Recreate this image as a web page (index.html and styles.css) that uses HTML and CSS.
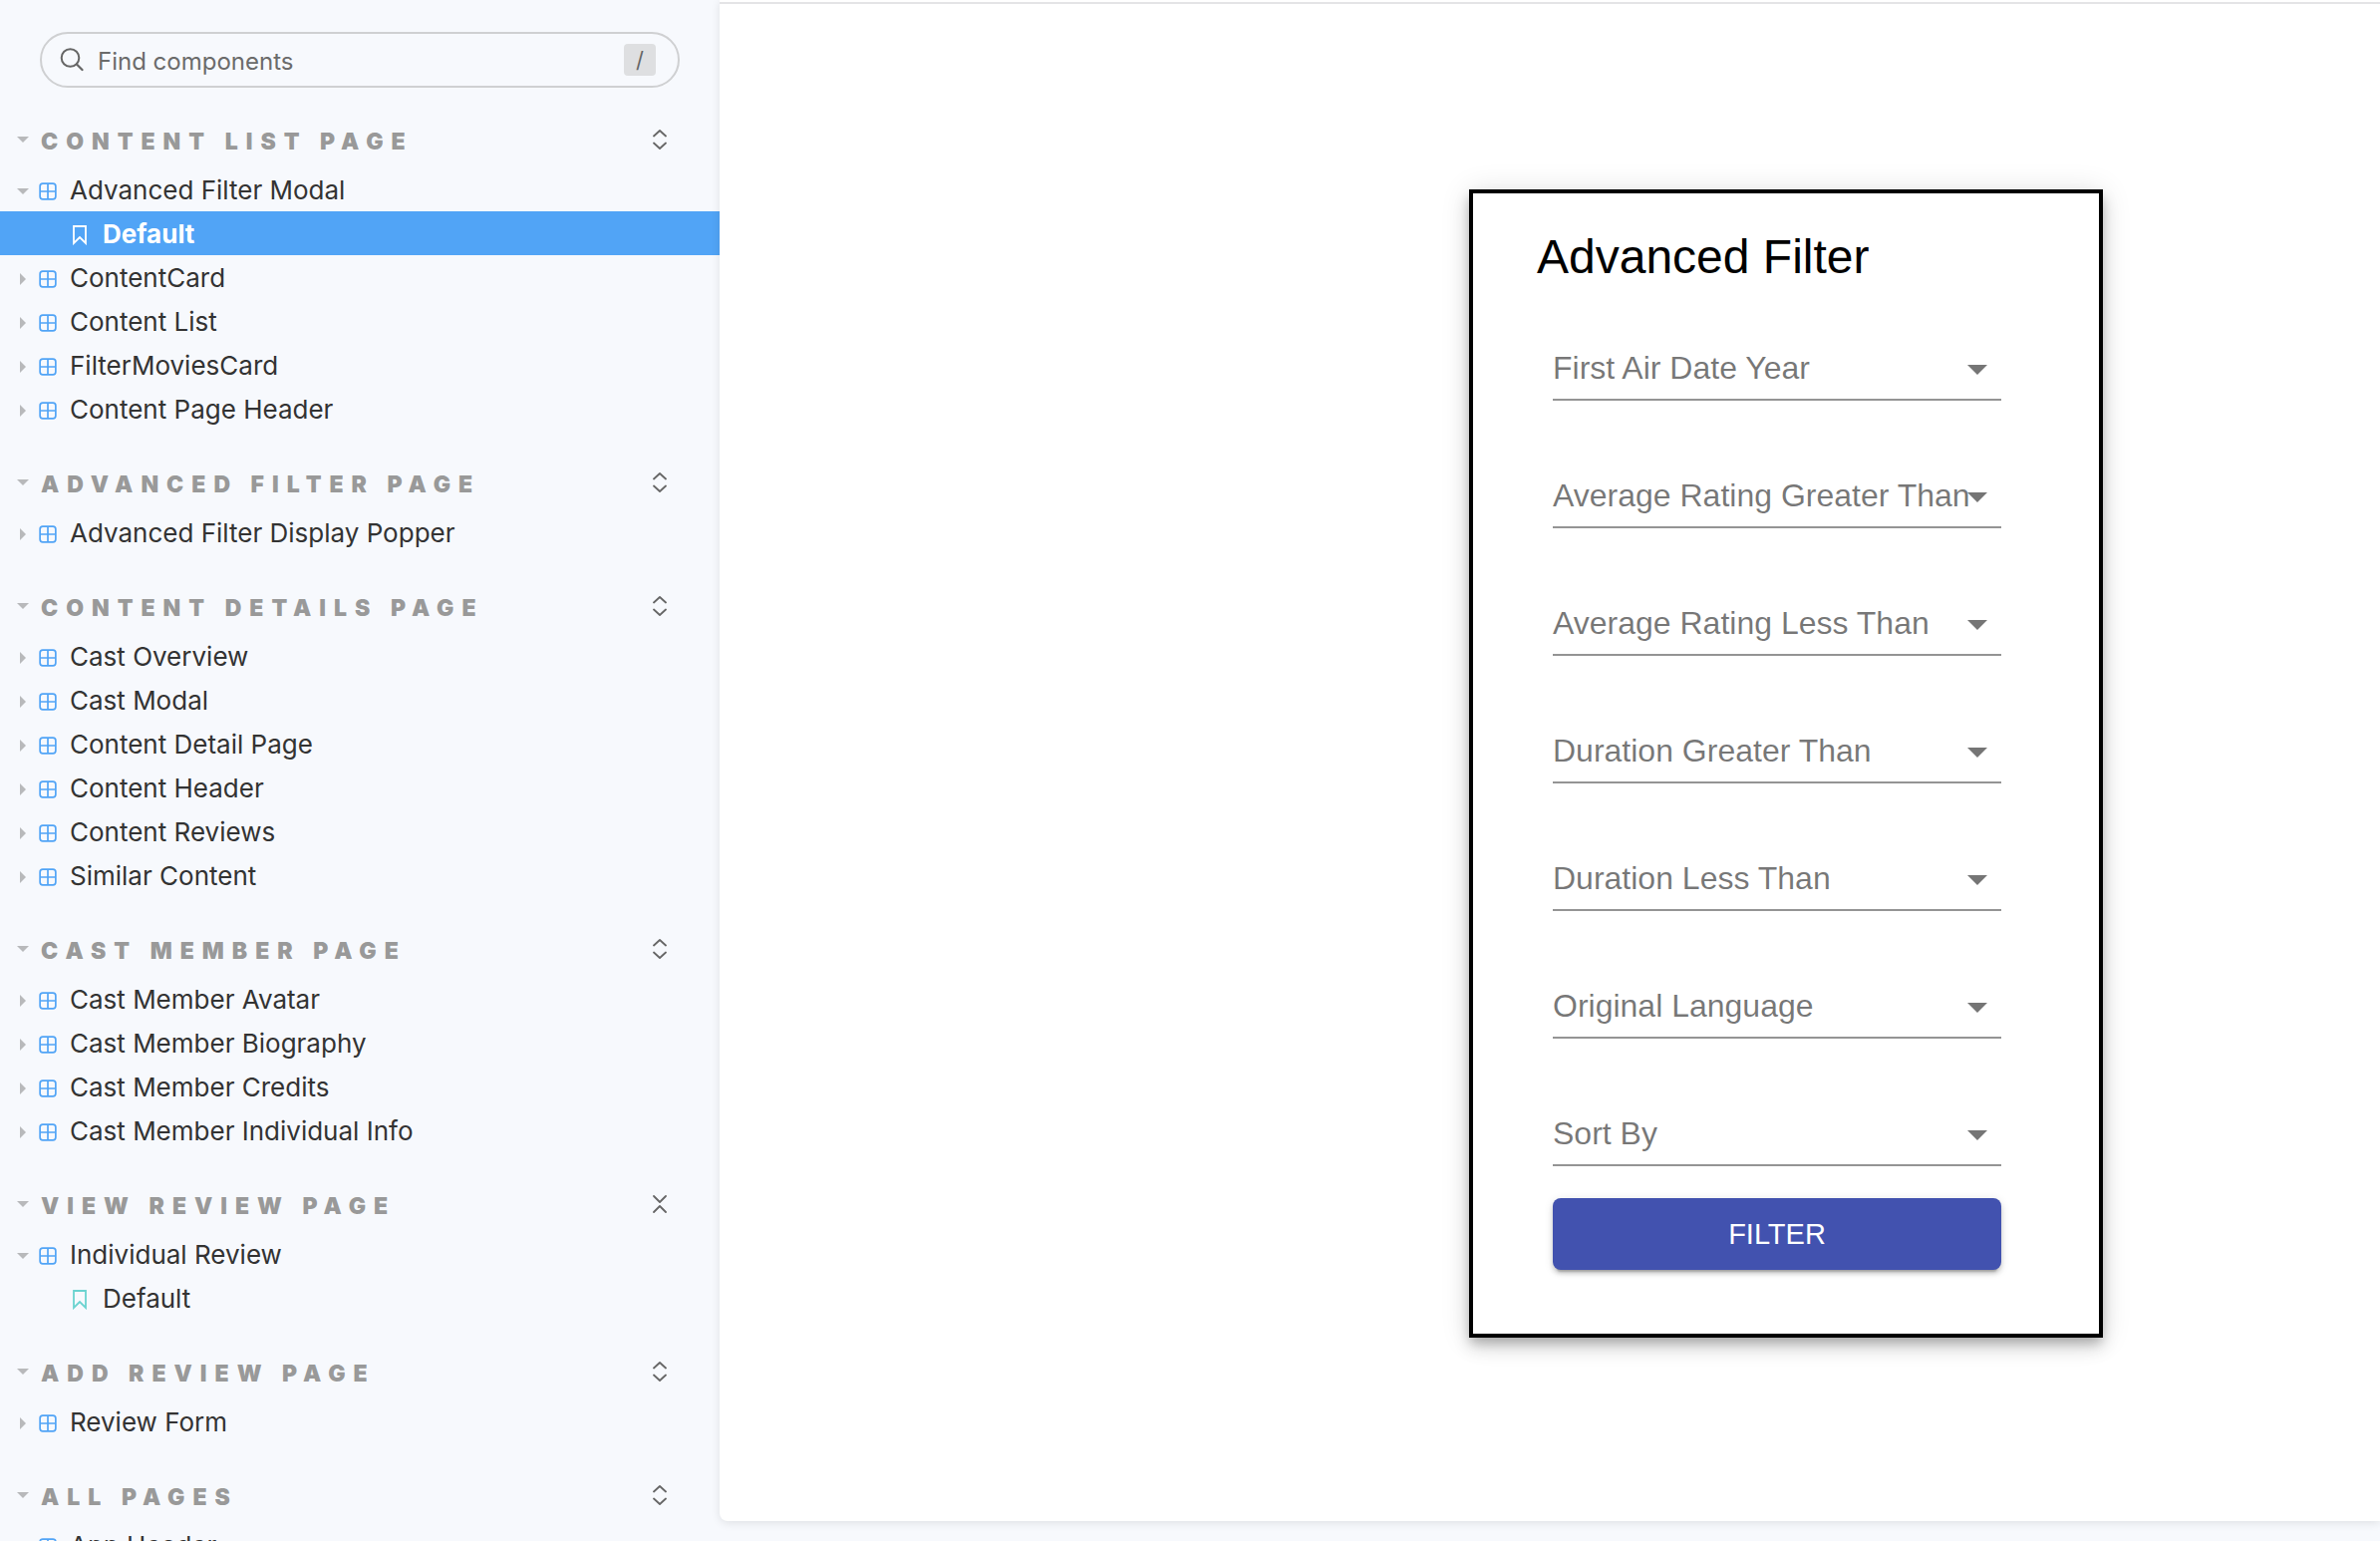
FILE: index.html
```html
<!DOCTYPE html>
<html lang="en">
<head>
<meta charset="utf-8">
<title>Advanced Filter Modal - Default</title>
<link rel="stylesheet" href="styles.css">
</head>
<body>
<svg class="sprite" aria-hidden="true">
  <symbol id="component" viewBox="0 0 16 16"><rect x="1" y="1" width="14" height="14" rx="2.5" fill="none" stroke="currentColor" stroke-width="1.5"/><path d="M8 1v14M1 8h14" stroke="currentColor" stroke-width="1.5"/></symbol>
  <symbol id="bookmark" viewBox="0 0 14 20"><path d="M1 1h12v17l-6-6-6 6z" fill="none" stroke="currentColor" stroke-width="1.8"/></symbol>
  <symbol id="down" viewBox="0 0 12 12"><path d="M0 3h12L6 9z" fill="currentColor"/></symbol>
  <symbol id="right" viewBox="0 0 12 12"><path d="M3 0v12l6-6z" fill="currentColor"/></symbol>
  <symbol id="expand" viewBox="0 0 14 20"><path d="M1 6.500l6-5.500 6 5.500M1 13.500l6 5.500 6-5.500" fill="none" stroke="currentColor" stroke-width="1.800" stroke-linecap="round" stroke-linejoin="round"/></symbol>
  <symbol id="collapse" viewBox="0 0 14 20"><path d="M1 2l6 6 6-6M1 18l6-6 6 6" fill="none" stroke="currentColor" stroke-width="1.800" stroke-linecap="round" stroke-linejoin="round"/></symbol>
</svg>
<div class="app">
  <aside class="sidebar">
    <form class="search" role="search">
      <svg class="search-icon" viewBox="0 0 24 24" aria-hidden="true"><circle cx="10.500" cy="10" r="8.800" fill="none" stroke="currentColor" stroke-width="2"/><path d="M17 16.500l5.500 5.500" stroke="currentColor" stroke-width="2.200" stroke-linecap="round"/></svg>
      <input class="search-input" type="text" placeholder="Find components" aria-label="Find components">
      <kbd class="key">/</kbd>
    </form>
    <nav>
      <section class="group">
        <div class="heading"><svg class="caret"><use href="#down"/></svg><h2 class="heading-text">Content List Page</h2><button class="toggle" type="button" aria-label="Expand all"><svg class="toggle-icon"><use href="#expand"/></svg></button></div>
        <a class="item" href="#"><svg class="caret"><use href="#down"/></svg><svg class="component"><use href="#component"/></svg>Advanced Filter Modal</a>
        <a class="item story selected" href="#"><svg class="bookmark"><use href="#bookmark"/></svg>Default</a>
        <a class="item" href="#"><svg class="caret"><use href="#right"/></svg><svg class="component"><use href="#component"/></svg>ContentCard</a>
        <a class="item" href="#"><svg class="caret"><use href="#right"/></svg><svg class="component"><use href="#component"/></svg>Content List</a>
        <a class="item" href="#"><svg class="caret"><use href="#right"/></svg><svg class="component"><use href="#component"/></svg>FilterMoviesCard</a>
        <a class="item" href="#"><svg class="caret"><use href="#right"/></svg><svg class="component"><use href="#component"/></svg>Content Page Header</a>
      </section>
      <section class="group">
        <div class="heading"><svg class="caret"><use href="#down"/></svg><h2 class="heading-text">Advanced Filter Page</h2><button class="toggle" type="button" aria-label="Expand all"><svg class="toggle-icon"><use href="#expand"/></svg></button></div>
        <a class="item" href="#"><svg class="caret"><use href="#right"/></svg><svg class="component"><use href="#component"/></svg>Advanced Filter Display Popper</a>
      </section>
      <section class="group">
        <div class="heading"><svg class="caret"><use href="#down"/></svg><h2 class="heading-text">Content Details Page</h2><button class="toggle" type="button" aria-label="Expand all"><svg class="toggle-icon"><use href="#expand"/></svg></button></div>
        <a class="item" href="#"><svg class="caret"><use href="#right"/></svg><svg class="component"><use href="#component"/></svg>Cast Overview</a>
        <a class="item" href="#"><svg class="caret"><use href="#right"/></svg><svg class="component"><use href="#component"/></svg>Cast Modal</a>
        <a class="item" href="#"><svg class="caret"><use href="#right"/></svg><svg class="component"><use href="#component"/></svg>Content Detail Page</a>
        <a class="item" href="#"><svg class="caret"><use href="#right"/></svg><svg class="component"><use href="#component"/></svg>Content Header</a>
        <a class="item" href="#"><svg class="caret"><use href="#right"/></svg><svg class="component"><use href="#component"/></svg>Content Reviews</a>
        <a class="item" href="#"><svg class="caret"><use href="#right"/></svg><svg class="component"><use href="#component"/></svg>Similar Content</a>
      </section>
      <section class="group">
        <div class="heading"><svg class="caret"><use href="#down"/></svg><h2 class="heading-text">Cast Member Page</h2><button class="toggle" type="button" aria-label="Expand all"><svg class="toggle-icon"><use href="#expand"/></svg></button></div>
        <a class="item" href="#"><svg class="caret"><use href="#right"/></svg><svg class="component"><use href="#component"/></svg>Cast Member Avatar</a>
        <a class="item" href="#"><svg class="caret"><use href="#right"/></svg><svg class="component"><use href="#component"/></svg>Cast Member Biography</a>
        <a class="item" href="#"><svg class="caret"><use href="#right"/></svg><svg class="component"><use href="#component"/></svg>Cast Member Credits</a>
        <a class="item" href="#"><svg class="caret"><use href="#right"/></svg><svg class="component"><use href="#component"/></svg>Cast Member Individual Info</a>
      </section>
      <section class="group">
        <div class="heading"><svg class="caret"><use href="#down"/></svg><h2 class="heading-text">View Review Page</h2><button class="toggle" type="button" aria-label="Collapse all"><svg class="toggle-icon"><use href="#collapse"/></svg></button></div>
        <a class="item" href="#"><svg class="caret"><use href="#down"/></svg><svg class="component"><use href="#component"/></svg>Individual Review</a>
        <a class="item story" href="#"><svg class="bookmark"><use href="#bookmark"/></svg>Default</a>
      </section>
      <section class="group">
        <div class="heading"><svg class="caret"><use href="#down"/></svg><h2 class="heading-text">Add Review Page</h2><button class="toggle" type="button" aria-label="Expand all"><svg class="toggle-icon"><use href="#expand"/></svg></button></div>
        <a class="item" href="#"><svg class="caret"><use href="#right"/></svg><svg class="component"><use href="#component"/></svg>Review Form</a>
      </section>
      <section class="group">
        <div class="heading"><svg class="caret"><use href="#down"/></svg><h2 class="heading-text">All Pages</h2><button class="toggle" type="button" aria-label="Expand all"><svg class="toggle-icon"><use href="#expand"/></svg></button></div>
        <a class="item" href="#"><svg class="caret"><use href="#right"/></svg><svg class="component"><use href="#component"/></svg>App Header</a>
      </section>
    </nav>
  </aside>
  <main class="stage">
    <div class="canvas">
      <form class="modal">
        <h1 class="title">Advanced Filter</h1>
        <div class="fields">
          <div class="field"><label class="label" for="year">First Air Date Year</label><select class="select" id="year"><option></option></select><svg class="arrow" viewBox="0 0 20 10"><path d="M0 0h20L10 10z"/></svg></div>
          <div class="field"><label class="label" for="rating-gt">Average Rating Greater Than</label><select class="select" id="rating-gt"><option></option></select><svg class="arrow" viewBox="0 0 20 10"><path d="M0 0h20L10 10z"/></svg></div>
          <div class="field"><label class="label" for="rating-lt">Average Rating Less Than</label><select class="select" id="rating-lt"><option></option></select><svg class="arrow" viewBox="0 0 20 10"><path d="M0 0h20L10 10z"/></svg></div>
          <div class="field"><label class="label" for="duration-gt">Duration Greater Than</label><select class="select" id="duration-gt"><option></option></select><svg class="arrow" viewBox="0 0 20 10"><path d="M0 0h20L10 10z"/></svg></div>
          <div class="field"><label class="label" for="duration-lt">Duration Less Than</label><select class="select" id="duration-lt"><option></option></select><svg class="arrow" viewBox="0 0 20 10"><path d="M0 0h20L10 10z"/></svg></div>
          <div class="field"><label class="label" for="language">Original Language</label><select class="select" id="language"><option></option></select><svg class="arrow" viewBox="0 0 20 10"><path d="M0 0h20L10 10z"/></svg></div>
          <div class="field"><label class="label" for="sort">Sort By</label><select class="select" id="sort"><option></option></select><svg class="arrow" viewBox="0 0 20 10"><path d="M0 0h20L10 10z"/></svg></div>
        </div>
        <button class="submit" type="button">FILTER</button>
      </form>
    </div>
  </main>
</div>
</body>
</html>
```
FILE: styles.css
```css
* { box-sizing: border-box; }

body {
  margin: 0;
  background: #f7f9fd;
  color: #333;
  font-family: Inter, "Liberation Sans", sans-serif;
  overflow: hidden;
}

.sprite { display: none; }

.app {
  display: flex;
  height: 100vh;
  overflow: hidden;
}

.sidebar {
  flex: 0 0 722px;
  padding-top: 32px;
  overflow: hidden;
}

.search {
  display: flex;
  align-items: center;
  gap: 14px;
  height: 56px;
  margin: 0 40px;
  padding: 0 22px 0 18px;
  border: 2px solid #cfd0d2;
  border-radius: 28px;
}

.search-icon { width: 24px; height: 24px; color: #666; }

.search-input {
  flex: 1;
  min-width: 0;
  padding: 3px 0 0;
  border: 0;
  outline: 0;
  background: none;
  color: #333;
  font: 24px/32px Inter, "Liberation Sans", sans-serif;
}

.search-input::placeholder { color: #6b6b6b; opacity: 1; }

.key {
  width: 32px;
  border-radius: 4px;
  background: #dedfe1;
  color: #666;
  font: 22px/32px Inter, "Liberation Sans", sans-serif;
  text-align: center;
}

.group { padding-top: 28px; }

.heading {
  display: flex;
  align-items: center;
  gap: 12px;
  height: 52px;
  padding: 0 53px 4px 17px;
}

.heading-text {
  flex: 1;
  margin: 0;
  padding-top: 4px;
  color: #999;
  font-size: 23px;
  font-weight: 900;
  line-height: 32px;
  letter-spacing: 8px;
  text-transform: uppercase;
}

.caret {
  flex: none;
  width: 12px;
  height: 12px;
  color: #b8b9bb;
}

.toggle {
  padding: 0;
  border: 0;
  background: none;
  color: #666;
}

.toggle-icon { display: block; width: 14px; height: 20px; }

.item {
  display: flex;
  align-items: center;
  height: 44px;
  padding: 2px 0 0 17px;
  color: #333;
  font-size: 26px;
  line-height: 32px;
  text-decoration: none;
}

.item .caret { margin-top: 2px; }

.component {
  flex: none;
  width: 18px;
  height: 18px;
  margin: 2px 13px 0 10px;
  color: #51a4f6;
}

.story { padding-left: 73px; }

.bookmark {
  flex: none;
  width: 14px;
  height: 20px;
  margin: 2px 16px 0 0;
  color: #6bd3d0;
}

.selected {
  background: #51a4f6;
  color: #fff;
  font-weight: 700;
}

.selected .bookmark { color: #fff; }

.stage {
  flex: 1;
  min-width: 0;
  margin-bottom: 20px;
  padding-top: 2px;
  border-bottom-left-radius: 8px;
  background: #fff;
  box-shadow: 0 2px 10px rgba(0, 0, 0, 0.1);
}

.canvas {
  display: flex;
  align-items: center;
  justify-content: center;
  height: 100%;
  padding: 2px 0 0 474px;
  border-top: 2px solid #e4e4e6;
}

.modal {
  width: 636px;
  padding: 32px 98px 64px 80px;
  border: 4px solid #000;
  background: #fff;
  box-shadow: 0 6px 10px -2px rgba(0, 0, 0, 0.2), 0 10px 16px rgba(0, 0, 0, 0.14), 0 2px 28px rgba(0, 0, 0, 0.12);
  font-family: "Liberation Sans", Arial, sans-serif;
}

.title {
  margin: 0 0 0 -16px;
  color: #000;
  font-size: 48px;
  font-weight: 400;
  line-height: 64px;
}

.fields {
  display: grid;
  gap: 64px;
  padding: 48px 0 32px;
}

.field {
  display: grid;
  align-items: center;
  height: 64px;
  border-bottom: 2px solid #949494;
}

.label,
.select,
.arrow { grid-area: 1 / 1; }

.label {
  color: rgba(0, 0, 0, 0.54);
  font-size: 32px;
  line-height: 62px;
  white-space: nowrap;
  pointer-events: none;
}

.select {
  width: 100%;
  height: 62px;
  appearance: none;
  border: 0;
  background: none;
  font: 32px/62px "Liberation Sans", Arial, sans-serif;
}

.arrow {
  justify-self: end;
  width: 20px;
  height: 10px;
  margin: 4px 14px 0 0;
  fill: rgba(0, 0, 0, 0.54);
  pointer-events: none;
}

.submit {
  display: block;
  width: 100%;
  height: 72px;
  padding: 0;
  border: 0;
  border-radius: 8px;
  background: #4252af;
  color: #fff;
  box-shadow: 0 6px 2px -4px rgba(0, 0, 0, 0.2), 0 4px 4px rgba(0, 0, 0, 0.14), 0 2px 10px rgba(0, 0, 0, 0.12);
  font: 29px/72px "Liberation Sans", Arial, sans-serif;
}
```
